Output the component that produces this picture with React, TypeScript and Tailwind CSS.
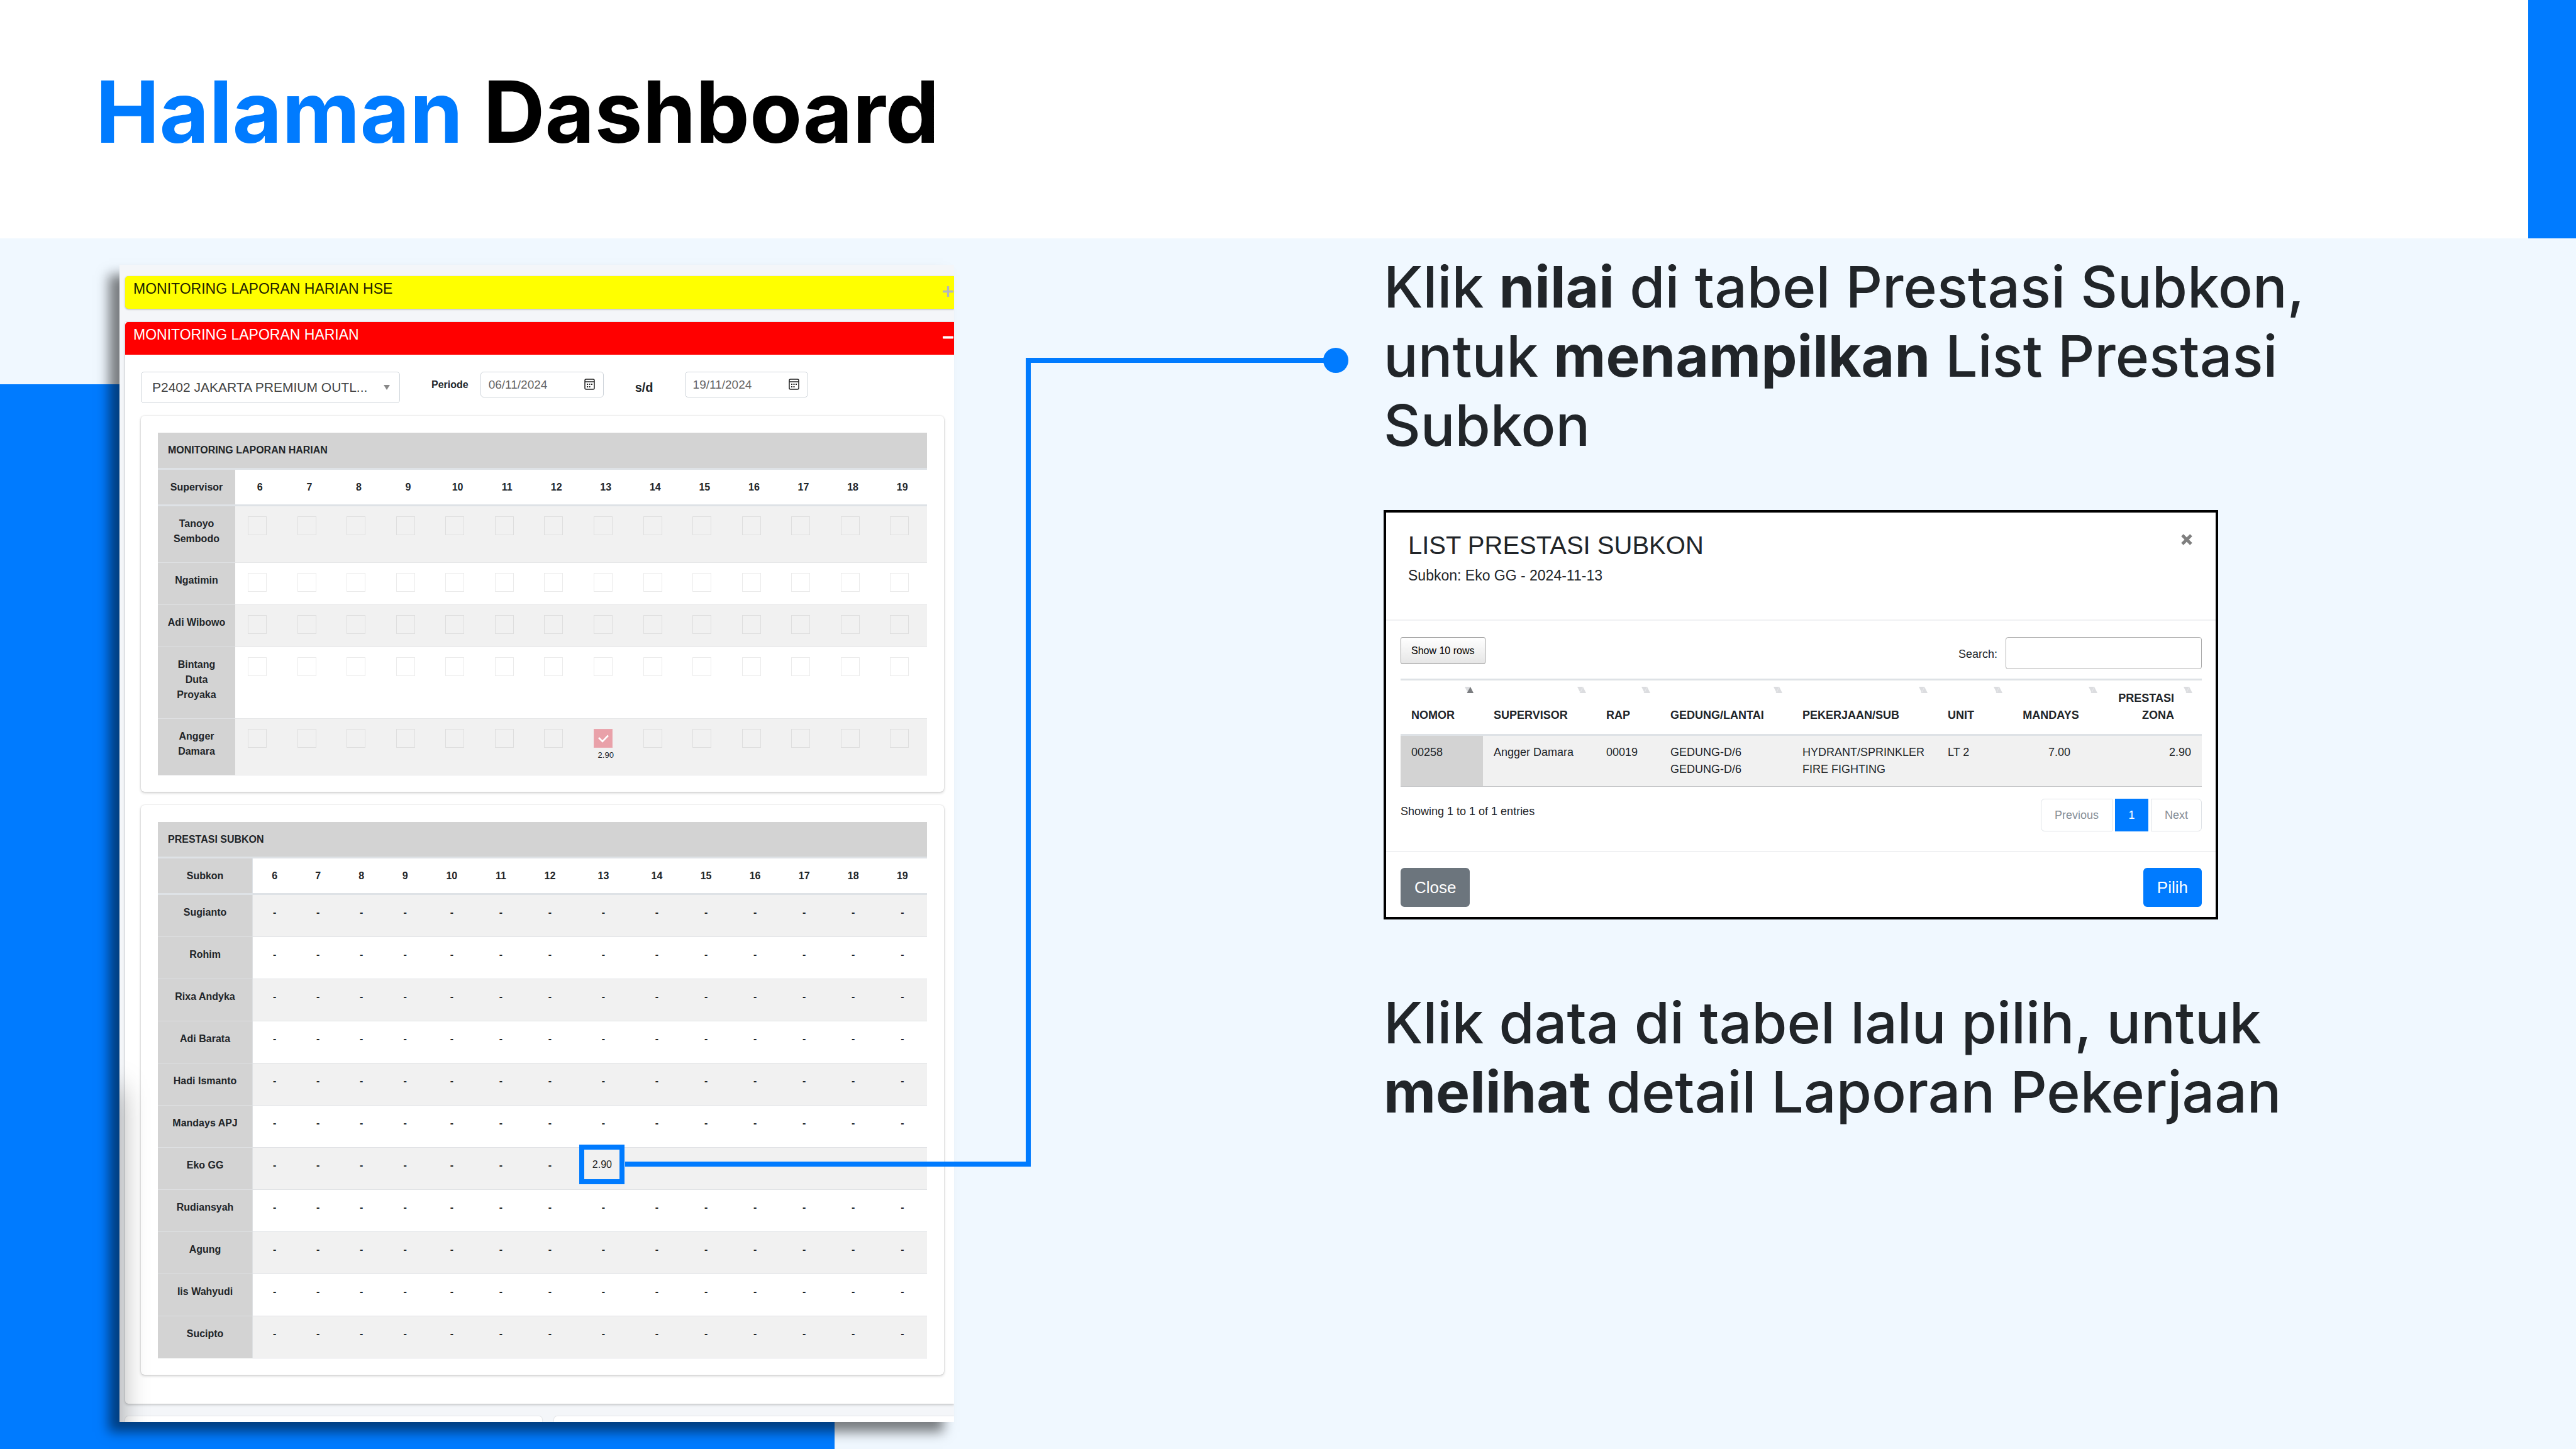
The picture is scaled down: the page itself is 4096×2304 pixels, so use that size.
import React from "react";

const days = [6, 7, 8, 9, 10, 11, 12, 13, 14, 15, 16, 17, 18, 19];

const supervisors = [
  { name: "Tanoyo Sembodo", height: "h-[90px]", striped: true },
  { name: "Ngatimin", height: "h-[67px]", striped: false },
  { name: "Adi Wibowo", height: "h-[67px]", striped: true },
  { name: "Bintang Duta Proyaka", height: "h-[114px]", striped: false },
  { name: "Angger Damara", height: "h-[90px]", striped: true, checkedDay: 13, value: "2.90" },
];

const subkons = [
  "Sugianto",
  "Rohim",
  "Rixa Andyka",
  "Adi Barata",
  "Hadi Ismanto",
  "Mandays APJ",
  "Eko GG",
  "Rudiansyah",
  "Agung",
  "Iis Wahyudi",
  "Sucipto",
];

const subkonColumns = [
  "w-[151px]",
  "w-[69px]",
  "w-[69px]",
  "w-[69px]",
  "w-[70px]",
  "w-[78px]",
  "w-[78px]",
  "w-[78px]",
  "w-[92px]",
  "w-[78px]",
  "w-[78px]",
  "w-[78px]",
  "w-[78px]",
  "w-[78px]",
  "w-[78px]",
];

const listColumns = [
  { label: "NOMOR", width: "w-[131px]", align: "text-left", active: true },
  { label: "SUPERVISOR", width: "w-[179px]", align: "text-left" },
  { label: "RAP", width: "w-[102px]", align: "text-left" },
  { label: "GEDUNG/LANTAI", width: "w-[210px]", align: "text-left" },
  { label: "PEKERJAAN/SUB", width: "w-[231px]", align: "text-left" },
  { label: "UNIT", width: "w-[119px]", align: "text-left" },
  { label: "MANDAYS", width: "w-[151px]", align: "text-center" },
  { label: "PRESTASI ZONA", width: "w-[151px]", align: "text-right" },
];

function CalendarIcon() {
  return (
    <svg viewBox="0 0 17 18" className="h-[18px] w-[17px]" aria-hidden="true">
      <rect x="1" y="1" width="15" height="16" rx="2" fill="none" stroke="#222" strokeWidth="1.5" />
      <path d="M1 5H16" stroke="#222" strokeWidth="1.5" />
      <g fill="#222">
        <rect x="4" y="8" width="2" height="2" />
        <rect x="7.5" y="8" width="2" height="2" />
        <rect x="11" y="8" width="2" height="2" />
        <rect x="4" y="12" width="2" height="2" />
        <rect x="7.5" y="12" width="2" height="2" />
      </g>
    </svg>
  );
}

function DateField({ id, label, value }: { id: string; label: string; value: string }) {
  return (
    <div className="relative h-[41px] w-[196px]">
      <input
        id={id}
        aria-label={label}
        defaultValue={value}
        className="h-full w-full rounded-[5px] border border-[#ced4da] bg-white pl-[12px] text-[19px] text-[#666]"
      />
      <button type="button" aria-label={`Pilih ${label}`} className="absolute top-[11px] right-[14px]">
        <CalendarIcon />
      </button>
    </div>
  );
}

function SortIcon({ active }: { active?: boolean }) {
  return (
    <svg viewBox="0 0 14 10" className="absolute top-[10px] right-[15px] h-[10px] w-[14px]" aria-hidden="true">
      <path d="M0 0H9L5 10Z" fill="#dcdde0" />
      <path d="M3.5 10H14L9 0Z" fill={active ? "#7b7d80" : "#dcdde0"} />
      {!active && <path d="M5 9L8.5 1" stroke="#eeeff1" strokeWidth="0.8" />}
    </svg>
  );
}

function SectionBar({
  title,
  className,
  open,
}: {
  title: string;
  className: string;
  open: boolean;
}) {
  return (
    <div className={`flex h-[52px] items-start justify-between pr-px pl-[13px] ${className}`}>
      <h2 className="text-[23px] leading-10">{title}</h2>
      <button type="button" aria-label={open ? "Tutup" : "Buka"} className="mt-4">
        <svg viewBox="0 0 17 17" className="h-[17px] w-[17px]" aria-hidden="true">
          {open ? (
            <rect x="0" y="6.5" width="17" height="4" rx="1" fill="#fff" />
          ) : (
            <path d="M0 8.5H17M8.5 0V17" stroke="#b4b6bd" strokeWidth="3.4" />
          )}
        </svg>
      </button>
    </div>
  );
}

function SupervisorTable() {
  return (
    <table className="w-full table-fixed border-separate border-spacing-0 text-[16px] leading-6 text-[#212529]">
      <colgroup>
        <col className="w-[123px]" />
        {days.map((d) => (
          <col key={d} />
        ))}
      </colgroup>
      <thead>
        <tr className="h-[59px]">
          <th colSpan={15} className="border-b-3 border-[#dee2e6] bg-[#d3d3d3] px-4 pt-4 text-left align-top">
            MONITORING LAPORAN HARIAN
          </th>
        </tr>
        <tr className="h-[58px]">
          <th className="border-b-3 border-[#dee2e6] bg-[#d3d3d3] pt-4 align-top">Supervisor</th>
          {days.map((d) => (
            <th key={d} className="border-b-3 border-[#dee2e6] bg-white pt-4 align-top">
              {d}
            </th>
          ))}
        </tr>
      </thead>
      <tbody>
        {supervisors.map((s) => (
          <tr key={s.name} className={`${s.height} ${s.striped ? "bg-[#f1f1f1]" : "bg-white"}`}>
            <th className="border-b border-[#dee0e2] bg-[#d3d3d3] px-[14px] pt-4 align-top">{s.name}</th>
            {days.map((d) => (
              <td key={d} className="border-b border-[#e6e7e8] p-0 pt-4 align-top">
                <label className="relative ml-5 block h-[30px] w-[30px]">
                  <input
                    type="checkbox"
                    aria-label={`${s.name}, tanggal ${d}`}
                    defaultChecked={s.checkedDay === d}
                    className="peer block h-[30px] w-[30px] appearance-none border border-black/8 checked:border-[#eba9b0] checked:bg-[#e9a1a9]"
                  />
                  <svg
                    viewBox="0 0 30 30"
                    className="absolute inset-0 hidden h-[30px] w-[30px] peer-checked:block"
                    aria-hidden="true"
                  >
                    <path d="M8 14L14 20L23 10.5" fill="none" stroke="#fff" strokeWidth="2.6" />
                  </svg>
                </label>
                {s.checkedDay === d && (
                  <span className="block pt-1 text-center text-[13px] leading-[16px]">{s.value}</span>
                )}
              </td>
            ))}
          </tr>
        ))}
      </tbody>
    </table>
  );
}

function SubkonTable() {
  return (
    <table className="w-full table-fixed border-separate border-spacing-0 text-[16px] leading-6 text-[#212529]">
      <colgroup>
        {subkonColumns.map((w, i) => (
          <col key={i} className={w} />
        ))}
      </colgroup>
      <thead>
        <tr className="h-[58px]">
          <th colSpan={15} className="border-b-3 border-[#dee2e6] bg-[#d3d3d3] px-4 pt-4 text-left align-top">
            PRESTASI SUBKON
          </th>
        </tr>
        <tr className="h-[58px]">
          <th className="border-r border-b-3 border-[#dee2e6] bg-[#d3d3d3] pt-4 align-top">Subkon</th>
          {days.map((d) => (
            <th key={d} className="border-b-3 border-[#dee2e6] bg-white pt-4 align-top">
              {d}
            </th>
          ))}
        </tr>
      </thead>
      <tbody>
        {subkons.map((name) => (
          <tr key={name} className="h-[67px] bg-white odd:bg-[#f1f1f1]">
            <th className="border-r border-b border-[#dee0e2] bg-[#d3d3d3] pt-4 align-top">{name}</th>
            {days.map((d) =>
              name === "Eko GG" && d === 13 ? (
                <td key={d} className="relative border-b border-[#e0e2e5] p-0">
                  <button
                    type="button"
                    className="absolute -top-[5px] left-2 flex h-[63px] w-[72px] items-center justify-center border-8 border-[#007bff] text-[16px]"
                  >
                    2.90
                  </button>
                </td>
              ) : (
                <td key={d} className="border-b border-[#e0e2e5] p-0 pt-4 text-center align-top font-bold">
                  -
                </td>
              ),
            )}
          </tr>
        ))}
      </tbody>
    </table>
  );
}

function MonitoringPanel() {
  const card =
    "rounded-[6px] bg-white px-[27px] pt-[27px] pb-[26px] shadow-[0_0_2px_rgba(0,0,0,0.18),0_2px_4px_rgba(0,0,0,0.18)]";
  return (
    <section className="relative overflow-hidden bg-[#f4f6f9] pt-[18px] pl-[9px] font-['Liberation_Sans',Arial,sans-serif] shadow-[-17px_16px_18px_rgba(0,0,0,0.5)]">
      <SectionBar
        title="MONITORING LAPORAN HARIAN HSE"
        open={false}
        className="mb-[21px] rounded-l-[5px] bg-[#ffff00] text-[#1f2200] shadow-[0_1px_3px_rgba(0,0,0,0.3)]"
      />
      <div className="rounded-bl-[5px] bg-white pb-[46px] shadow-[0_0_2px_rgba(0,0,0,0.18),0_2px_4px_rgba(0,0,0,0.18)]">
        <SectionBar title="MONITORING LAPORAN HARIAN" open className="rounded-tl-[5px] bg-[#ff0000] text-white" />
        <div className="pt-[27px] pr-4 pl-[25px]">
          <form className="mb-5 flex items-start" onSubmit={(e) => e.preventDefault()}>
            <div className="relative h-[50px] w-[412px]">
              <select
                aria-label="Proyek"
                className="h-full w-full appearance-none rounded-[5px] border border-[#ced4da] bg-white pl-[17px] text-[21px] text-[#444]"
              >
                <option>P2402 JAKARTA PREMIUM OUTL...</option>
              </select>
              <svg
                viewBox="0 0 10 8"
                className="pointer-events-none absolute top-[21px] right-[16px] h-2 w-[10px]"
                aria-hidden="true"
              >
                <path d="M0 0H10L5 8Z" fill="#888" />
              </svg>
            </div>
            <label
              htmlFor="tanggal-awal"
              className="mr-[19px] ml-[50px] text-[16px] leading-[41px] font-bold text-[#212529]"
            >
              Periode
            </label>
            <DateField id="tanggal-awal" label="tanggal awal" value="06/11/2024" />
            <label
              htmlFor="tanggal-akhir"
              className="mr-[50px] ml-[50px] text-[20px] leading-[50px] font-bold text-[#212529]"
            >
              s/d
            </label>
            <DateField id="tanggal-akhir" label="tanggal akhir" value="19/11/2024" />
          </form>
          <div className={`mb-[21px] ${card}`}>
            <SupervisorTable />
          </div>
          <div className={card}>
            <SubkonTable />
          </div>
        </div>
      </div>
      <div className="mt-5 flex gap-[19px]">
        <div className="h-[9px] w-[663px] rounded-t-[5px] bg-white shadow-[0_0_2px_rgba(0,0,0,0.2)]" />
        <div className="h-[9px] flex-1 rounded-tl-[5px] bg-white shadow-[0_0_2px_rgba(0,0,0,0.2)]" />
      </div>
      <div className="pointer-events-none absolute top-[1309px] -bottom-20 -left-10 w-10 shadow-[0_0_46px_rgba(0,0,0,0.4)]" />
    </section>
  );
}

function ListDialog() {
  return (
    <section
      aria-labelledby="judul-list"
      className="w-full max-w-[1327px] border-4 border-black bg-white font-['Liberation_Sans',Arial,sans-serif] text-[18px] leading-[27px] text-[#212529]"
    >
      <header className="flex items-start justify-between border-b-2 border-[#f0f1f3] pt-7 pr-[37px] pb-[53px] pl-[35px]">
        <div>
          <h2 id="judul-list" className="text-[40px] leading-12">
            LIST PRESTASI SUBKON
          </h2>
          <p className="mt-[7px] text-[23px] leading-[34px]">Subkon: Eko GG - 2024-11-13</p>
        </div>
        <button type="button" aria-label="Tutup" className="mt-[6px]">
          <svg viewBox="0 0 18 18" className="h-[18px] w-[18px]" aria-hidden="true">
            <path d="M2 2L16 16M16 2L2 16" stroke="#7f7f7f" strokeWidth="5" />
          </svg>
        </button>
      </header>
      <div className="border-b border-[#e4e6e9] pt-[26px] pr-[22px] pb-[31px] pl-[23px]">
        <div className="mb-3 flex items-start justify-between">
          <button
            type="button"
            className="h-[43px] rounded-[3px] border border-[#999] bg-linear-to-b from-white to-[#e6e6e6] px-4 text-[16px] text-black"
          >
            Show 10 rows
          </button>
          <div className="flex items-start gap-[13px]">
            <label htmlFor="cari" className="leading-[54px]">
              Search:
            </label>
            <input id="cari" className="h-[51px] w-[312px] rounded-[4px] border border-[#aaa] px-3" />
          </div>
        </div>
        <table className="w-full table-fixed border-separate border-spacing-0">
          <colgroup>
            {listColumns.map((c) => (
              <col key={c.label} className={c.width} />
            ))}
          </colgroup>
          <thead>
            <tr className="h-[91px]">
              {listColumns.map((c) => (
                <th
                  key={c.label}
                  className={`relative border-t-3 border-b-3 border-[#dee2e6] p-0 pr-[44px] pb-4 pl-[17px] align-bottom ${c.align}`}
                >
                  {c.label}
                  <SortIcon active={c.active} />
                </th>
              ))}
            </tr>
          </thead>
          <tbody>
            <tr className="h-[81px] bg-[#f1f1f1] align-top [&>td]:border-b [&>td]:border-[#c2c3c5] [&>td]:px-[17px] [&>td]:pt-[13px]">
              <td className="bg-[#d3d3d3]">00258</td>
              <td>Angger Damara</td>
              <td>00019</td>
              <td>
                GEDUNG-D/6
                <br />
                GEDUNG-D/6
              </td>
              <td className="whitespace-nowrap">
                HYDRANT/SPRINKLER
                <br />
                FIRE FIGHTING
              </td>
              <td>LT 2</td>
              <td className="text-center">7.00</td>
              <td className="text-right">2.90</td>
            </tr>
          </tbody>
        </table>
        <div className="mt-[19px] flex items-start justify-between">
          <p className="mt-[7px]">Showing 1 to 1 of 1 entries</p>
          <nav aria-label="Halaman" className="flex gap-1">
            <button type="button" className="h-[52px] rounded-l-[6px] border border-[#dee2e6] px-[21px] text-[#868e96]">
              Previous
            </button>
            <button type="button" className="h-[52px] w-[53px] bg-[#007bff] text-white">
              1
            </button>
            <button type="button" className="h-[52px] rounded-r-[6px] border border-[#dee2e6] px-[21px] text-[#868e96]">
              Next
            </button>
          </nav>
        </div>
      </div>
      <footer className="flex justify-between pt-[26px] pr-[22px] pb-4 pl-[23px] text-[26px] text-white">
        <button type="button" className="h-[62px] rounded-[6px] bg-[#6c757d] px-[22px]">
          Close
        </button>
        <button type="button" className="h-[62px] rounded-[6px] bg-[#007bff] px-[22px]">
          Pilih
        </button>
      </footer>
    </section>
  );
}

export default function App() {
  return (
    <div className="flex min-h-screen flex-col bg-[#f0f8ff] font-['Inter',sans-serif]">
      <header className="flex h-[379px] justify-between bg-white">
        <h1 className="pt-[98px] pl-[152px] text-[136px] leading-[160px] font-bold text-black">
          <span className="text-[#007bff]">Halaman</span> Dashboard
        </h1>
        <div className="w-[76px] bg-[#007bff]" />
      </header>
      <main className="relative grid flex-1 grid-cols-[1327fr_683fr_1896fr] items-start pl-[190px]">
        <div className="absolute top-[232px] bottom-0 left-0 w-[1327px] bg-[#007bff]" />
        <div className="pt-[42px] pb-[40px]">
          <MonitoringPanel />
        </div>
        <svg
          viewBox="0 0 1150 1302"
          className="pointer-events-none absolute top-[174px] left-[994px] h-[1302px] w-[1150px]"
          aria-hidden="true"
        >
          <path d="M0 1298H641V20H1130" fill="none" stroke="#007bff" strokeWidth="8" />
          <circle cx="1130" cy="20" r="20" fill="#007bff" />
        </svg>
        <div className="col-start-3 pt-[22px] text-[91px] leading-[110px] font-medium text-[#212529]">
          <p className="mb-20 max-w-[1500px]">
            Klik <strong className="font-bold">nilai</strong> di tabel Prestasi Subkon, untuk{" "}
            <strong className="font-bold">menampilkan</strong> List Prestasi Subkon
          </p>
          <ListDialog />
          <p className="mt-[109px] max-w-[1500px]">
            Klik data di tabel lalu pilih, untuk <strong className="font-bold">melihat</strong> detail Laporan Pekerjaan
          </p>
        </div>
      </main>
    </div>
  );
}
